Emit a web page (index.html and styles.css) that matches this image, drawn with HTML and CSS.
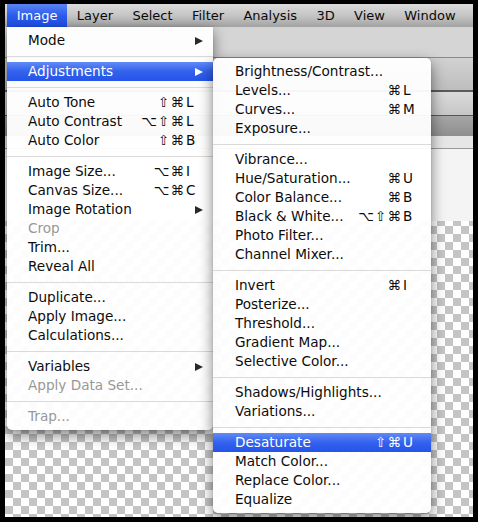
FILE: index.html
```html
<!DOCTYPE html>
<html>
<head>
<meta charset="utf-8">
<link rel="stylesheet" href="styles.css">
</head>
<body>
<div class="screen">
  <div class="app">
    <nav class="menubar">
      <span class="mb-item active">Image</span>
      <span class="mb-item">Layer</span>
      <span class="mb-item">Select</span>
      <span class="mb-item">Filter</span>
      <span class="mb-item">Analysis</span>
      <span class="mb-item">3D</span>
      <span class="mb-item">View</span>
      <span class="mb-item">Window</span>
    </nav>
    <div class="workspace">
      <div class="options-bar"></div>
      <div class="tab-bar"></div>
      <div class="panel-strip"></div>
      <div class="doc-tabs"></div>
      <div class="ruler"></div>
      <div class="canvas-top"></div>
      <div class="canvas"></div>
    </div>

    <div class="menu main-menu">
      <div class="item has-sub"><span>Mode</span><span class="arrow"></span></div>
      <div class="sep"></div>
      <div class="item has-sub active"><span>Adjustments</span><span class="arrow"></span></div>
      <div class="sep"></div>
      <div class="item"><span>Auto Tone</span><span class="sc"><span class="mods">⇧⌘</span><span class="key">L</span></span></div>
      <div class="item"><span>Auto Contrast</span><span class="sc"><span class="mods">⌥⇧⌘</span><span class="key">L</span></span></div>
      <div class="item"><span>Auto Color</span><span class="sc"><span class="mods">⇧⌘</span><span class="key">B</span></span></div>
      <div class="sep"></div>
      <div class="item"><span>Image Size...</span><span class="sc"><span class="mods">⌥⌘</span><span class="key">I</span></span></div>
      <div class="item"><span>Canvas Size...</span><span class="sc"><span class="mods">⌥⌘</span><span class="key">C</span></span></div>
      <div class="item has-sub"><span>Image Rotation</span><span class="arrow"></span></div>
      <div class="item disabled"><span>Crop</span></div>
      <div class="item"><span>Trim...</span></div>
      <div class="item"><span>Reveal All</span></div>
      <div class="sep"></div>
      <div class="item"><span>Duplicate...</span></div>
      <div class="item"><span>Apply Image...</span></div>
      <div class="item"><span>Calculations...</span></div>
      <div class="sep"></div>
      <div class="item has-sub"><span>Variables</span><span class="arrow"></span></div>
      <div class="item disabled"><span>Apply Data Set...</span></div>
      <div class="sep"></div>
      <div class="item disabled"><span>Trap...</span></div>
    </div>

    <div class="menu submenu">
      <div class="item"><span>Brightness/Contrast...</span></div>
      <div class="item"><span>Levels...</span><span class="sc"><span class="mods">⌘</span><span class="key">L</span></span></div>
      <div class="item"><span>Curves...</span><span class="sc"><span class="mods">⌘</span><span class="key">M</span></span></div>
      <div class="item"><span>Exposure...</span></div>
      <div class="sep"></div>
      <div class="item"><span>Vibrance...</span></div>
      <div class="item"><span>Hue/Saturation...</span><span class="sc"><span class="mods">⌘</span><span class="key">U</span></span></div>
      <div class="item"><span>Color Balance...</span><span class="sc"><span class="mods">⌘</span><span class="key">B</span></span></div>
      <div class="item"><span>Black &amp; White...</span><span class="sc"><span class="mods">⌥⇧⌘</span><span class="key">B</span></span></div>
      <div class="item"><span>Photo Filter...</span></div>
      <div class="item"><span>Channel Mixer...</span></div>
      <div class="sep"></div>
      <div class="item"><span>Invert</span><span class="sc"><span class="mods">⌘</span><span class="key">I</span></span></div>
      <div class="item"><span>Posterize...</span></div>
      <div class="item"><span>Threshold...</span></div>
      <div class="item"><span>Gradient Map...</span></div>
      <div class="item"><span>Selective Color...</span></div>
      <div class="sep"></div>
      <div class="item"><span>Shadows/Highlights...</span></div>
      <div class="item"><span>Variations...</span></div>
      <div class="sep"></div>
      <div class="item active"><span>Desaturate</span><span class="sc"><span class="mods">⇧⌘</span><span class="key">U</span></span></div>
      <div class="item"><span>Match Color...</span></div>
      <div class="item"><span>Replace Color...</span></div>
      <div class="item"><span>Equalize</span></div>
    </div>
  </div>
</div>
</body>
</html>
```

FILE: styles.css
```css
* { box-sizing: border-box; }

html, body {
  margin: 0;
  padding: 0;
  background: #000;
}

.screen {
  width: 478px;
  height: 522px;
  padding: 4px 5px 5px 5px;
  background: #000;
  font-family: "DejaVu Sans", "Liberation Sans", sans-serif;
}

.app {
  position: relative;
  width: 468px;
  height: 513px;
  display: flex;
  flex-direction: column;
  overflow: hidden;
}

/* ---------- menubar ---------- */
.menubar {
  height: 23px;
  flex: none;
  display: flex;
  padding-left: 2px;
  background: linear-gradient(#dcdcdc, #c2c2c2 55%, #a2a2a2);
  font-size: 13px;
  line-height: 23px;
  color: #0a0a0a;
}

.mb-item {
  padding: 0 9.7px;
  white-space: nowrap;
}

.mb-item.active {
  color: #fff;
  background: linear-gradient(#5b84f4, #2c5cec 50%, #1e4ee6);
}

/* ---------- workspace behind menus ---------- */
.workspace {
  flex: 1;
  display: flex;
  flex-direction: column;
}

.options-bar {
  height: 31px;
  background: #d5d5d5;
  border-bottom: 1px solid #8a8a8a;
}

.tab-bar {
  height: 34px;
  background: linear-gradient(#d2d2d2, #bdbdbd);
  border-bottom: 2px solid #5a5a5a;
}

.panel-strip {
  height: 24px;
  background: linear-gradient(#dadada, #c6c6c6);
  border-bottom: 1px solid #555;
}

.doc-tabs {
  height: 20px;
  background: linear-gradient(#a6a6a6, #8e8e8e);
}

.ruler {
  height: 13px;
  background: #e6e6e6;
  border-bottom: 1px solid #999;
}

.canvas-top {
  height: 72px;
  background: #f4f4f4;
}

.canvas {
  flex: 1;
  background-color: #fff;
  background-image: conic-gradient(#c4c4c4 25%, #fff 0 50%, #c4c4c4 0 75%, #fff 0);
  background-size: 16px 16px;
  background-position: 0 5px;
}

/* ---------- menus ---------- */
.menu {
  position: absolute;
  padding: 4px 0;
  background: rgba(255, 255, 255, 0.95);
  font-size: 13.6px;
  color: #0c0c0c;
  box-shadow: 0 5px 14px rgba(0, 0, 0, 0.5), 0 0 1px rgba(0, 0, 0, 0.35);
}

.main-menu {
  left: 2px;
  top: 23px;
  width: 206px;
  border-radius: 0 0 5px 5px;
}

.submenu {
  left: 208px;
  top: 54px;
  width: 218px;
  border-radius: 5px;
}

.item {
  height: 19px;
  line-height: 19px;
  display: flex;
  justify-content: space-between;
  align-items: center;
  white-space: nowrap;
}

.main-menu .item {
  padding: 0 14px 0 21px;
}

.main-menu .item.has-sub {
  padding-right: 10px;
}

.submenu .item {
  padding: 0 15px 0 22px;
}

.item.disabled {
  color: #989898;
}

.item.active {
  color: #fff;
  background: linear-gradient(#628af5, #3362ee 50%, #2453e8);
}

.sep {
  height: 1px;
  margin: 6px 0 5px;
  background: #dadada;
}

.sc {
  display: flex;
}

.mods {
  letter-spacing: 1px;
}

.key {
  width: 14px;
  padding-left: 1px;
}

.arrow {
  width: 0;
  height: 0;
  border-left: 8px solid #2a2a2a;
  border-top: 4.5px solid transparent;
  border-bottom: 4.5px solid transparent;
}

.item.active .arrow {
  border-left-color: #fff;
}
```
